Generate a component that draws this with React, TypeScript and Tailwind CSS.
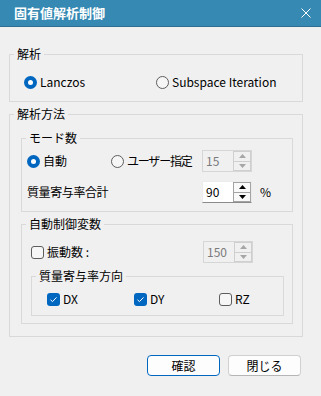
import type { ReactNode } from "react";

function Group({ title, className = "", children }: { title: string; className?: string; children: ReactNode }) {
  return (
    <fieldset className={`min-w-0 border border-[#d9d9d9] ${className}`}>
      <legend className="ml-[4px] px-[3px] text-[12px] leading-[14px] text-black">{title}</legend>
      {children}
    </fieldset>
  );
}

function Radio({ checked }: { checked?: boolean }) {
  if (checked) {
    return (
      <span className="flex h-[13px] w-[13px] shrink-0 items-center justify-center rounded-full bg-[#0067c0]">
        <span className="h-[5px] w-[5px] rounded-full bg-white" />
      </span>
    );
  }
  return <span className="h-[13px] w-[13px] shrink-0 rounded-full border border-[#5d5d5d] bg-[#f6f6f6]" />;
}

function Check({ checked }: { checked?: boolean }) {
  if (checked) {
    return (
      <span className="flex h-[13px] w-[13px] shrink-0 items-center justify-center rounded-[3px] bg-[#0067c0]">
        <svg width="9" height="9" viewBox="0 0 9 9">
          <path d="M1.5 4.8 L3.5 6.6 L7.5 2.4" fill="none" stroke="white" strokeWidth="1" />
        </svg>
      </span>
    );
  }
  return <span className="h-[13px] w-[13px] shrink-0 rounded-[3px] border border-[#5d5d5d] bg-[#f6f6f6]" />;
}

function Arrow({ up, color }: { up?: boolean; color: string }) {
  return (
    <svg width="7" height="4" viewBox="0 0 7 4">
      <path d={up ? "M0 4 L3.5 0 L7 4 Z" : "M0 0 L3.5 4 L7 0 Z"} fill={color} />
    </svg>
  );
}

function Spin({ value, disabled }: { value: string; disabled?: boolean }) {
  const btn = disabled
    ? "border-[#cfcfcf] bg-[#f0f0f0]"
    : "border-[#a3a3a3] bg-[#f9f9f9]";
  const arrow = disabled ? "#a6a6a6" : "#000000";
  return (
    <div
      className={`flex h-[22px] w-[50px] border ${
        disabled ? "border-[#d6d6d6] bg-[#f0f0f0]" : "border-[#ececec] border-b-[#8a8a8a] bg-white"
      }`}
    >
      <div
        className={`flex flex-1 items-center pl-[3px] text-[12px] leading-[14px] ${
          disabled ? "text-[#7a7a7a]" : "text-black"
        }`}
      >
        {value}
      </div>
      <div className="flex w-[18px] flex-col">
        <div className={`flex flex-1 items-center justify-center border ${btn}`}>
          <Arrow up color={arrow} />
        </div>
        <div className={`flex flex-1 items-center justify-center border border-t-0 ${btn}`}>
          <Arrow color={arrow} />
        </div>
      </div>
    </div>
  );
}

export default function App() {
  return (
    <div className="flex h-[396px] w-[321px] flex-col bg-[#f0f0f0] font-['Noto_Sans_CJK_JP',sans-serif] text-black">
      <div className="flex h-[27px] shrink-0 items-center justify-between border-b border-[#2d6f92] bg-[#3589b2] pl-[14px] pr-[10px]">
        <span className="text-[13px] font-bold leading-[16px] text-white">固有値解析制御</span>
        <svg width="10" height="10" viewBox="0 0 10 10">
          <path d="M0.5 0.5 L9.5 9.5 M9.5 0.5 L0.5 9.5" stroke="white" strokeWidth="1" />
        </svg>
      </div>

      <div className="ml-[9px] flex w-[294px] flex-col pt-[20px]">
        <Group title="解析">
          <div className="flex items-center pb-[12px] pl-[14px] pt-[14px] text-[12px] leading-[14px]">
            <label className="flex w-[132px] items-center gap-[3px]">
              <Radio checked />
              <span>Lanczos</span>
            </label>
            <label className="flex items-center gap-[3px]">
              <Radio />
              <span>Subspace Iteration</span>
            </label>
          </div>
        </Group>

        <Group title="解析方法" className="mt-[5px]">
          <div className="flex flex-col pb-[12px] pl-[11px] pr-[9px] pt-[10px]">
            <Group title="モード数">
              <div className="flex flex-col pb-[8px] pl-[5px] pt-[5px] text-[12px] leading-[14px]">
                <div className="flex items-center">
                  <label className="flex w-[84px] items-center gap-[3px]">
                    <Radio checked />
                    <span>自動</span>
                  </label>
                  <label className="flex w-[91px] items-center gap-[3px]">
                    <Radio />
                    <span className="tracking-[-1.2px]">ユーザー指定</span>
                  </label>
                  <Spin value="15" disabled />
                </div>
                <div className="mt-[9px] flex items-center">
                  <span className="w-[175px] tracking-[-0.4px]">質量寄与率合計</span>
                  <Spin value="90" />
                  <span className="ml-[8px]">%</span>
                </div>
              </div>
            </Group>

            <Group title="自動制御変数" className="mt-[5px]">
              <div className="flex flex-col pb-[7px] pl-[9px] pr-[8px] pt-[10px] text-[12px] leading-[14px]">
                <div className="flex items-center">
                  <label className="flex w-[172px] items-center gap-[3px]">
                    <Check />
                    <span>振動数 :</span>
                  </label>
                  <Spin value="150" disabled />
                </div>
                <Group title="質量寄与率方向" className="mt-[6px]">
                  <div className="flex items-center pb-[9px] pl-[15px] pt-[9px]">
                    <label className="flex w-[87px] items-center gap-[3px]">
                      <Check checked />
                      <span>DX</span>
                    </label>
                    <label className="flex w-[85px] items-center gap-[3px]">
                      <Check checked />
                      <span>DY</span>
                    </label>
                    <label className="flex items-center gap-[3px]">
                      <Check />
                      <span>RZ</span>
                    </label>
                  </div>
                </Group>
              </div>
            </Group>
          </div>
        </Group>

        <div className="mt-[18px] flex justify-end gap-[8px] pr-[2px] text-[12px] leading-[14px]">
          <button className="h-[21px] w-[73px] rounded-[4px] border border-[#0067c0] bg-[#fdfdfd]">確認</button>
          <button className="h-[21px] w-[73px] rounded-[4px] border border-[#d0d0d0] border-b-[#b5b5b5] bg-[#fdfdfd]">
            閉じる
          </button>
        </div>
      </div>
    </div>
  );
}
